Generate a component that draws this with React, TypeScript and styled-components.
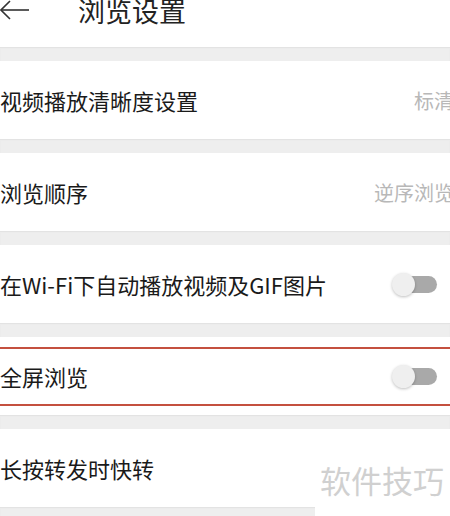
import React from 'react';
import styled, { createGlobalStyle } from 'styled-components';

const GlobalStyle = createGlobalStyle`
  body {
    margin: 0;
    background: #eeeeee;
    overflow: hidden;
    font-family: "Noto Sans CJK SC", "Noto Sans", sans-serif;
  }
`;

const Page = styled.div`
  position: relative;
  width: 450px;
  height: 516px;
  overflow: hidden;
  background: #eeeeee;
`;

const Header = styled.header`
  height: 47px;
  box-sizing: border-box;
  padding-bottom: 27px;
  display: flex;
  align-items: center;
  gap: 49px;
  background: #fff;
`;

const Title = styled.h1`
  margin: 0;
  font-size: 27px;
  line-height: 27px;
  font-weight: 400;
  color: #222;
`;

const Gap = styled.div`
  height: 14px;
  background: #eeeeee;
  box-shadow: inset 0 1px 1px #e2e2e2;
`;

const Row = styled.div`
  position: relative;
  height: 78px;
  display: flex;
  align-items: center;
  justify-content: space-between;
  background: #fff;
`;

const Label = styled.span`
  font-size: 22px;
  color: #1a1a1a;
  white-space: nowrap;
`;

const Value = styled.span`
  font-size: 20px;
  color: #b8b8b8;
  margin-right: -4px;
  white-space: nowrap;
`;

const Track = styled.div`
  width: 42px;
  height: 17px;
  margin-right: 13px;
  border-radius: 9px;
  background: #a9a9a9;
  display: flex;
  align-items: center;
`;

const Knob = styled.div`
  width: 23px;
  height: 23px;
  margin-left: -3px;
  border-radius: 50%;
  background: #efefef;
  box-shadow: 0 1px 3px rgba(0, 0, 0, 0.25);
`;

const Highlight = styled.div`
  position: absolute;
  left: -4px;
  right: -6px;
  top: 10px;
  bottom: 9px;
  border: 2.5px solid #c4503f;
  pointer-events: none;
`;

const Watermark = styled.div`
  position: absolute;
  left: 315px;
  top: 442px;
  width: 135px;
  height: 74px;
  background: #fff;
  display: flex;
  align-items: center;
  padding-left: 5px;
  box-sizing: border-box;
  font-size: 31px;
  color: #d0d0d0;
`;

const BackArrow = () => (
  <svg width="29" height="20" viewBox="0 0 29 20" fill="none" stroke="#333" strokeWidth="1.6">
    <path d="M29 10H1" />
    <path d="M10 1L1 10l9 9" />
  </svg>
);

const Switch = () => (
  <Track>
    <Knob />
  </Track>
);

export default function App() {
  return (
    <Page>
      <GlobalStyle />
      <Header>
        <BackArrow />
        <Title>浏览设置</Title>
      </Header>
      <Gap />
      <Row>
        <Label>视频播放清晰度设置</Label>
        <Value>标清</Value>
      </Row>
      <Gap />
      <Row>
        <Label>浏览顺序</Label>
        <Value>逆序浏览</Value>
      </Row>
      <Gap />
      <Row>
        <Label>在Wi-Fi下自动播放视频及GIF图片</Label>
        <Switch />
      </Row>
      <Gap />
      <Row>
        <Label>全屏浏览</Label>
        <Switch />
        <Highlight />
      </Row>
      <Gap />
      <Row>
        <Label>长按转发时快转</Label>
      </Row>
      <Gap />
      <Watermark>软件技巧</Watermark>
    </Page>
  );
}
